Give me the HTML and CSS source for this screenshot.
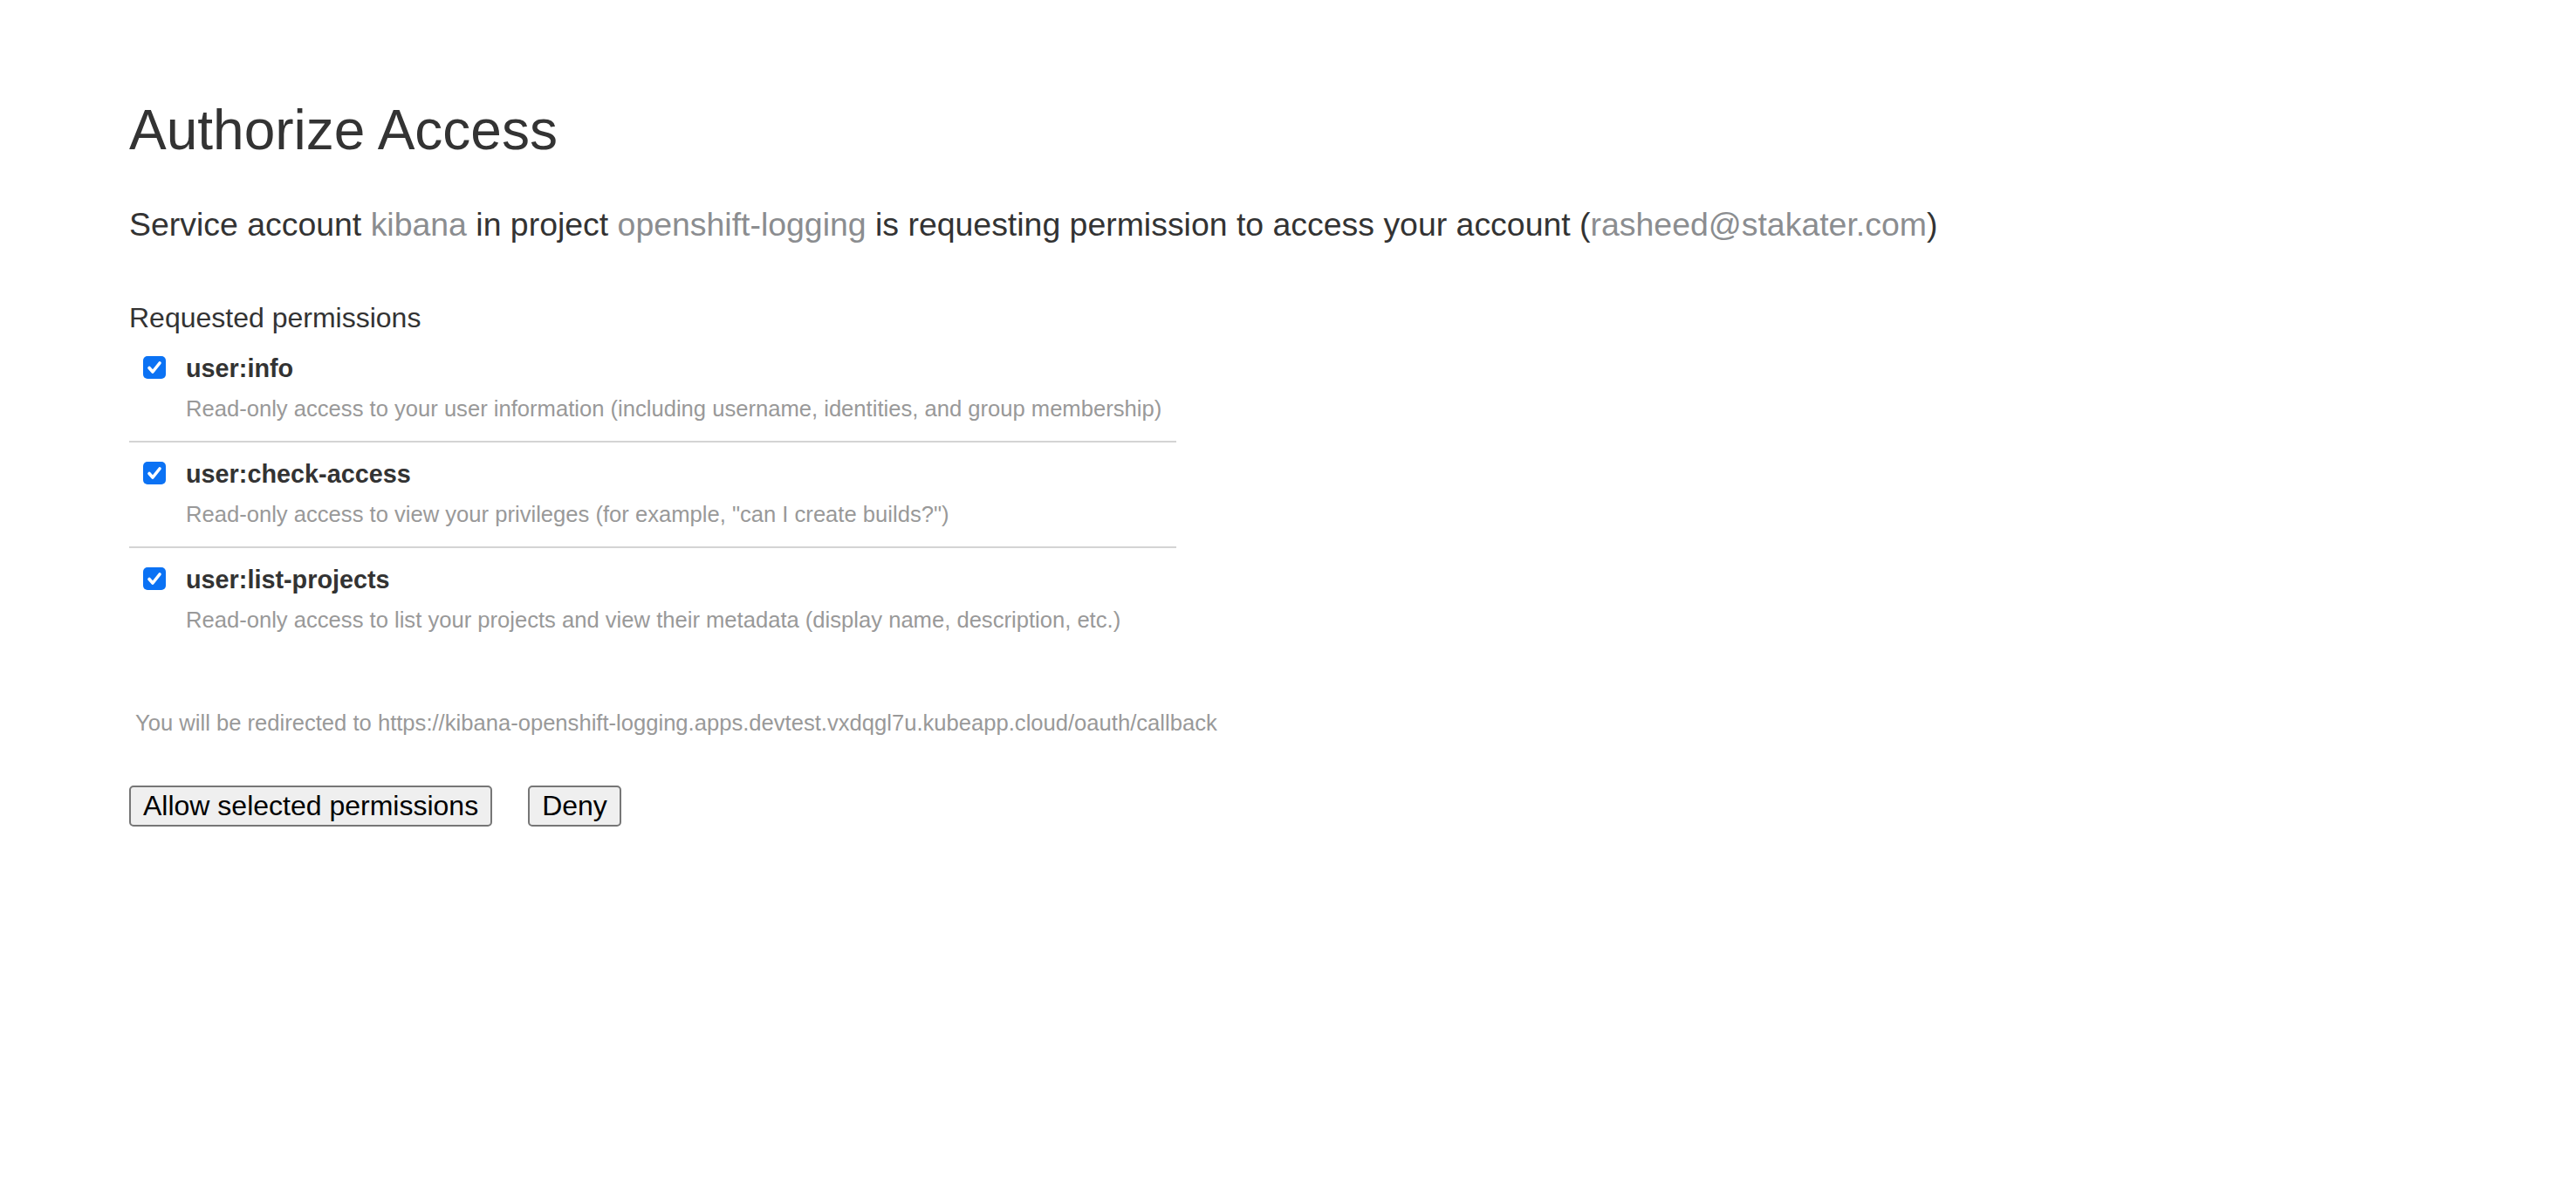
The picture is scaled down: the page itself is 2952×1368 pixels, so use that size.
FILE: index.html
```html
<!DOCTYPE html>
<html>
<head>
<meta charset="utf-8">
<title>Authorize Access</title>
<link rel="stylesheet" href="styles.css">
</head>
<body>
<main class="page">
  <h1 class="title">Authorize Access</h1>
  <h3 class="intro">Service account <span class="ident">kibana</span> in project <span class="ident">openshift-logging</span> is requesting permission to access your account (<span class="ident">rasheed@stakater.com</span>)</h3>
  <h4 class="section">Requested permissions</h4>
  <ul class="scope-list">
    <li class="scope">
      <span class="check"><svg viewBox="0 0 26 26" width="26" height="26"><path d="M7 13.5 L11 18 L19 8" fill="none" stroke="#fff" stroke-width="3.6" stroke-linecap="round" stroke-linejoin="round"/></svg></span>
      <div class="scope-body">
        <div class="scope-name">user:info</div>
        <div class="scope-desc">Read-only access to your user information (including username, identities, and group membership)</div>
      </div>
    </li>
    <li class="scope">
      <span class="check"><svg viewBox="0 0 26 26" width="26" height="26"><path d="M7 13.5 L11 18 L19 8" fill="none" stroke="#fff" stroke-width="3.6" stroke-linecap="round" stroke-linejoin="round"/></svg></span>
      <div class="scope-body">
        <div class="scope-name">user:check-access</div>
        <div class="scope-desc">Read-only access to view your privileges (for example, "can I create builds?")</div>
      </div>
    </li>
    <li class="scope">
      <span class="check"><svg viewBox="0 0 26 26" width="26" height="26"><path d="M7 13.5 L11 18 L19 8" fill="none" stroke="#fff" stroke-width="3.6" stroke-linecap="round" stroke-linejoin="round"/></svg></span>
      <div class="scope-body">
        <div class="scope-name">user:list-projects</div>
        <div class="scope-desc">Read-only access to list your projects and view their metadata (display name, description, etc.)</div>
      </div>
    </li>
  </ul>
  <div class="redirect">You will be redirected to https://kibana-openshift-logging.apps.devtest.vxdqgl7u.kubeapp.cloud/oauth/callback</div>
  <div class="actions">
    <button class="btn" type="button">Allow selected permissions</button>
    <button class="btn" type="button">Deny</button>
  </div>
</main>
</body>
</html>
```
FILE: styles.css
```css
html, body {
  margin: 0;
  padding: 0;
  background: #ffffff;
}
body {
  font-family: "Liberation Sans", Arial, Helvetica, sans-serif;
  color: #333333;
  font-size: 32px;
}
.page {
  padding: 112px 0 0 148px;
}
.title {
  margin: 0;
  font-size: 64px;
  line-height: 74px;
  font-weight: normal;
  color: #333333;
}
.intro {
  margin: 50px 0 0 0;
  font-size: 37.44px;
  line-height: 43px;
  font-weight: normal;
  color: #333333;
}
.ident {
  color: #8b8d90;
}
.section {
  margin: 67px 0 0 0;
  font-size: 32px;
  line-height: 37px;
  font-weight: normal;
  color: #333333;
}
.scope-list {
  list-style: none;
  margin: 3px 0 0 0;
  padding: 0;
  width: 1200px;
}
.scope {
  display: flex;
  align-items: flex-start;
  padding: 20px 0 22px 16px;
  border-bottom: 2px solid #d4d4d4;
}
.scope:last-child {
  border-bottom: none;
}
.check {
  flex: none;
  width: 26px;
  height: 26px;
  margin-top: 2px;
  border-radius: 5px;
  background: #0b72f4;
  display: flex;
}
.scope-body {
  margin-left: 23px;
}
.scope-name {
  font-size: 28.8px;
  line-height: 33px;
  font-weight: bold;
  color: #333333;
}
.scope-desc {
  margin-top: 15px;
  font-size: 25.6px;
  line-height: 29px;
  color: #999999;
}
.redirect {
  margin: 67px 0 0 7px;
  font-size: 25.6px;
  line-height: 29px;
  color: #999999;
}
.actions {
  display: flex;
  gap: 41px;
  margin-top: 57px;
}
.btn {
  font-family: "Liberation Sans", Arial, Helvetica, sans-serif;
  font-size: 32px;
  line-height: 37px;
  color: #000000;
  background: #efefef;
  border: 2px solid #767676;
  border-radius: 5px;
  padding: 3px 14px;
  margin: 0;
}
```
